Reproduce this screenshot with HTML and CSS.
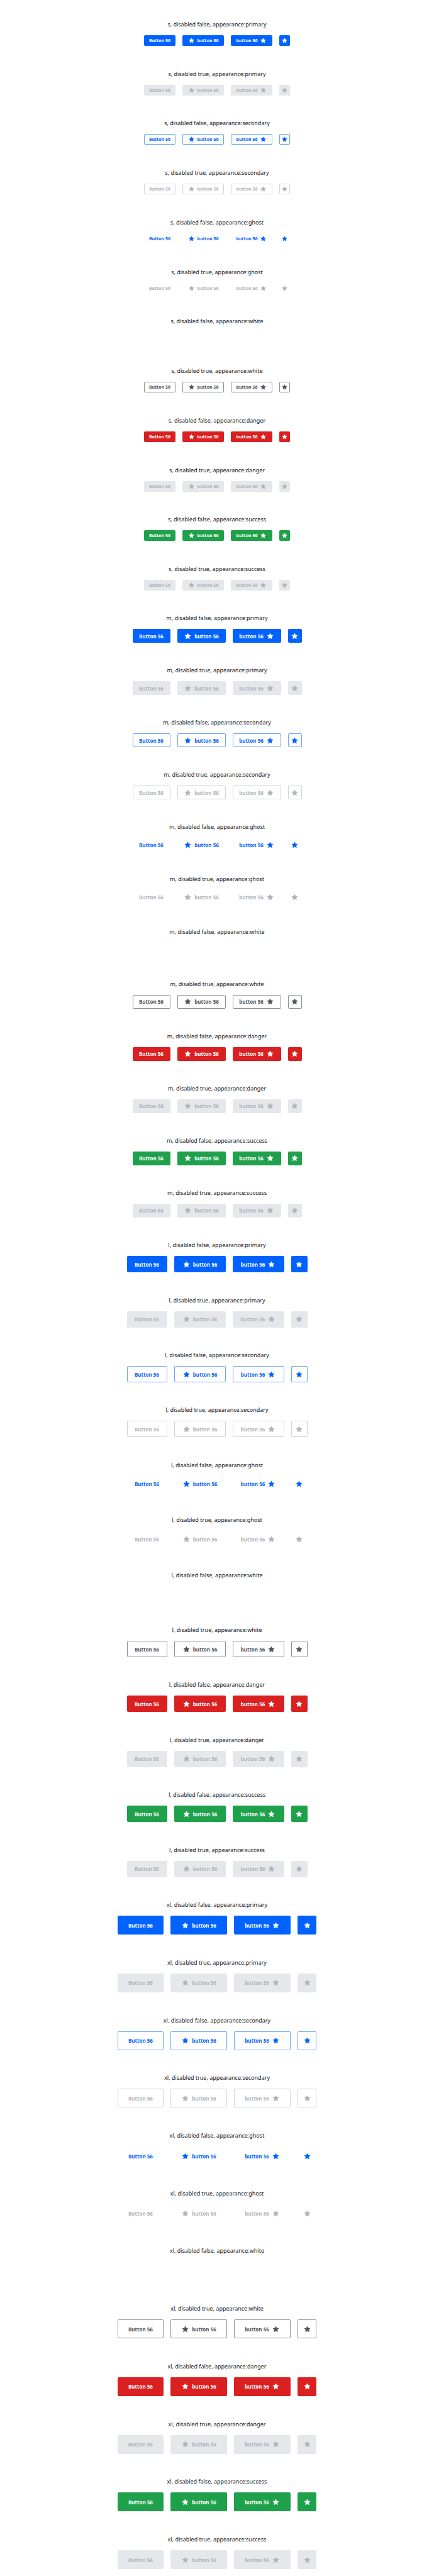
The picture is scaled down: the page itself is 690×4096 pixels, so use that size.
FILE: index.html
```html
<!DOCTYPE html>
<html lang="en">
<head>
<meta charset="utf-8">
<title>Button sizes and appearances</title>
<meta name="viewport" content="width=device-width, initial-scale=1">
<link rel="stylesheet" href="styles.css">
</head>
<body>
<svg class="sprite" aria-hidden="true">
  <symbol id="star" viewBox="0 0 24 24">
    <path stroke="currentColor" stroke-width="1" stroke-linejoin="round" d="M12 3.6 14.65 8.96 20.56 9.82 16.28 13.99 17.29 19.88 12 17.1 6.71 19.88 7.72 13.99 3.44 9.82 9.35 8.96z"/>
  </symbol>
</svg>
<main class="page" id="page"></main>
<script src="script.js"></script>
</body>
</html>
```
FILE: styles.css
```css
* {
  box-sizing: border-box;
}

body {
  margin: 0;
  background: #fff;
  color: #14161c;
  font-family: "Noto Sans", "Open Sans", sans-serif;
}

.sprite {
  display: none;
}

.page {
  display: grid;
  grid-template-rows: 146fr 154fr 162fr 170fr;
  min-height: 100vh;
  padding-top: 5px;
}

.group {
  display: grid;
  grid-auto-rows: 1fr;
}

.example {
  display: flex;
  flex-direction: column;
  justify-content: flex-end;
  align-items: center;
  gap: 11px;
  padding: 16px 0 11px;
}

.label {
  margin: 0;
  font-size: 9px;
  font-weight: 400;
  line-height: 13px;
}

.row {
  display: flex;
  gap: 11px;
}

.button {
  display: inline-flex;
  align-items: center;
  justify-content: center;
  gap: 4px;
  margin: 0;
  padding: 0 4px;
  border: 1px solid transparent;
  border-radius: 2px;
  font-family: inherit;
  font-size: 8px;
  font-weight: 700;
  line-height: 13px;
  white-space: nowrap;
}

.icon {
  flex: none;
  width: 13px;
  height: 13px;
  fill: currentColor;
}

.size-s { height: 17px; min-width: 50px; font-size: 7px; }
.size-m { height: 22px; min-width: 60px; }
.size-l { height: 26px; min-width: 64px; }
.size-xl { height: 30px; min-width: 73px; }

.size-s .icon { width: 11px; height: 11px; }

.size-s.with-icon { min-width: 66px; }
.size-m.with-icon { min-width: 77px; }
.size-l.with-icon { min-width: 82px; }
.size-xl.with-icon { min-width: 90px; }

.square { padding: 0; }
.size-s.square { min-width: 17px; }
.size-m.square { min-width: 22px; }
.size-l.square { min-width: 26px; }
.size-xl.square { min-width: 30px; }

.primary { background: #0062ff; color: #fff; }
.danger { background: #da2020; color: #fff; }
.success { background: #1ea14a; color: #fff; }
.white { background: #fff; color: #fff; }
.secondary { background: transparent; border-color: #6ba4ff; color: #0062ff; }
.ghost { background: transparent; color: #0062ff; }

.primary, .danger, .success { border: 0; }

.button:disabled { background: #e5e7eb; color: #b0b3bb; }
.secondary:disabled { background: transparent; border-color: #d2d4d9; }
.ghost:disabled { background: transparent; }
.white:disabled { background: transparent; border-color: #8e9097; color: #50535c; }
```
FILE: script.js
```js
const sizes = ["s", "m", "l", "xl"];
const appearances = ["primary", "secondary", "ghost", "white", "danger", "success"];
const star = '<svg class="icon" aria-hidden="true"><use href="#star"/></svg>';

function button(size, appearance, disabled, content, shape = "") {
  const name = shape === "square" ? ' aria-label="Star"' : "";
  const classes = `button size-${size} ${appearance} ${shape}`.trim();
  return `<button type="button" class="${classes}"${name}${disabled ? " disabled" : ""}>${content}</button>`;
}

function example(size, appearance, disabled) {
  return `<section class="example">
    <h2 class="label">${size}, disabled ${disabled}, appearance:${appearance}</h2>
    <div class="row">
      ${button(size, appearance, disabled, "<span>Button 56</span>")}
      ${button(size, appearance, disabled, star + "<span>button 56</span>", "with-icon")}
      ${button(size, appearance, disabled, "<span>button 56</span>" + star, "with-icon")}
      ${button(size, appearance, disabled, star, "square")}
    </div>
  </section>`;
}

document.getElementById("page").innerHTML = sizes.map(size =>
  `<div class="group">${appearances.map(appearance =>
    example(size, appearance, false) + example(size, appearance, true)
  ).join("")}</div>`
).join("");
```
